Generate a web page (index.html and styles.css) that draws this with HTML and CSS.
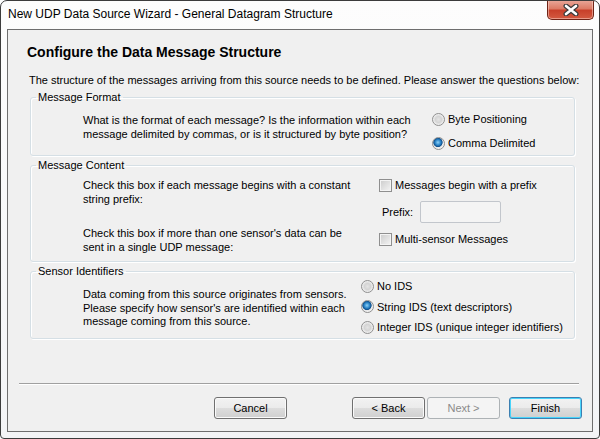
FILE: index.html
```html
<!DOCTYPE html>
<html lang="en">
<head>
  <meta charset="UTF-8">
  <title>New UDP Data Source Wizard</title>
  <link rel="stylesheet" href="styles.css">
</head>
<body>

  <div class="window">
    <div class="titlebar">
      <span class="title">New UDP Data Source Wizard - General Datagram Structure</span>
      <button class="close" title="Close">
        <svg width="16" height="12" viewBox="0 0 16 12">
          <path d="M3 2 L13 10 M13 2 L3 10" stroke="#3b3b3b" stroke-width="5" stroke-linecap="round"/>
          <path d="M3 2 L13 10 M13 2 L3 10" stroke="#ffffff" stroke-width="2.6" stroke-linecap="round"/>
        </svg>
      </button>
    </div>

    <div class="client">
      <h1>Configure the Data Message Structure</h1>
      <p class="intro">The structure of the messages arriving from this source needs to be defined. Please answer the questions below:</p>

      <fieldset class="group format">
        <legend>Message Format</legend>
        <div class="questions">
          <p>What is the format of each message? Is the information within each<br>message delimited by commas, or is it structured by byte position?</p>
        </div>
        <div class="options">
          <label class="opt"><span class="radio"></span>Byte Positioning</label>
          <label class="opt"><span class="radio on"></span>Comma Delimited</label>
        </div>
      </fieldset>

      <fieldset class="group content">
        <legend>Message Content</legend>
        <div class="questions">
          <p>Check this box if each message begins with a constant<br>string prefix:</p>
          <p>Check this box if more than one sensor's data can be<br>sent in a single UDP message:</p>
        </div>
        <div class="options">
          <label class="opt"><span class="check"></span>Messages begin with a prefix</label>
          <div class="prefix">
            <span>Prefix:</span>
            <input type="text" class="textbox" disabled>
          </div>
          <label class="opt"><span class="check"></span>Multi-sensor Messages</label>
        </div>
      </fieldset>

      <fieldset class="group sensors">
        <legend>Sensor Identifiers</legend>
        <div class="questions">
          <p>Data coming from this source originates from sensors.<br>Please specify how sensor's are identified within each<br>message coming from this source.</p>
        </div>
        <div class="options">
          <label class="opt"><span class="radio"></span>No IDS</label>
          <label class="opt"><span class="radio on"></span>String IDS (text descriptors)</label>
          <label class="opt"><span class="radio"></span>Integer IDS (unique integer identifiers)</label>
        </div>
      </fieldset>

      <div class="footer">
        <div class="separator"></div>
        <div class="buttons">
          <button class="btn cancel">Cancel</button>
          <button class="btn">&lt; Back</button>
          <button class="btn" disabled>Next &gt;</button>
          <button class="btn default">Finish</button>
        </div>
      </div>
    </div>
  </div>

</body>
</html>
```

FILE: styles.css
```css
html, body {
  margin: 0;
  padding: 0;
  background: #ffffff;
}
body {
  font-family: 'Liberation Sans', Arial, sans-serif;
  font-size: 11px;
  color: #000;
}
.window {
  width: 600px;
  height: 439px;
  box-sizing: border-box;
  border: 1px solid #3c3c3c;
  border-radius: 7px 7px 4px 4px;
  background: linear-gradient(#fdfdfd, #f3f4f6);
  display: flex;
  flex-direction: column;
  overflow: hidden;
}
.titlebar {
  height: 28px;
  flex: none;
  display: flex;
  align-items: flex-start;
  justify-content: space-between;
}
.title {
  padding: 6px 0 0 7px;
  font-size: 12px;
  line-height: 15px;
}
.close {
  width: 47px;
  height: 20px;
  margin: -1px 5px 0 0;
  padding: 0;
  border: 1px solid #6e2417;
  border-top: none;
  border-radius: 0 0 5px 5px;
  background: linear-gradient(#e9a99b 0%, #dc7b66 45%, #c8402a 55%, #d35a41 100%);
  box-shadow: inset 0 0 0 1px rgba(255, 220, 210, 0.5);
  display: flex;
  align-items: center;
  justify-content: center;
}
.client {
  flex: 1;
  min-height: 0;
  margin: 0 6px 6px 6px;
  border: 1px solid #6e6e6e;
  background: #f0f0f0;
  padding-top: 13px;
  display: flex;
  flex-direction: column;
}
h1 {
  margin: 0;
  padding-left: 19px;
  font-size: 14px;
  line-height: 18px;
  font-weight: bold;
}
.intro {
  margin: 12px 0 0 0;
  padding-left: 21px;
  line-height: 14px;
  white-space: nowrap;
}
.group {
  min-width: 0;
  margin: 3px 17px 0 22px;
  padding: 0 0 4px 5px;
  border: 1px solid #d5dfe5;
  border-radius: 3px;
  box-shadow: inset 1px 1px 0 #fff, 1px 1px 0 #fff;
  display: flex;
  align-items: flex-start;
}
.group legend {
  padding: 0 2px;
  line-height: 14px;
}
.questions {
  margin-left: 47px;
  display: flex;
  flex-direction: column;
  white-space: nowrap;
}
.questions p {
  margin: 0;
  line-height: 13.5px;
}
.options {
  display: flex;
  flex-direction: column;
}
.opt {
  height: 16px;
  display: flex;
  align-items: center;
  gap: 3px;
  white-space: nowrap;
}

/* Message Format */
.format {
  padding-top: 7px;
}
.format .questions {
  margin-top: 3px;
  width: 349px;
}
.format .options {
  gap: 8px;
}

/* Message Content */
.content {
  margin-top: 2px;
  padding-top: 5px;
  padding-bottom: 7px;
}
.content .questions {
  margin-top: 2px;
  width: 296px;
  gap: 21px;
}
.prefix {
  margin: 8px 0 8px 3px;
  display: flex;
  align-items: center;
  gap: 7px;
}
.textbox {
  width: 81px;
  height: 22px;
  box-sizing: border-box;
  margin: 0;
  border: 1px solid #c2c6cc;
  border-radius: 2px;
  background: #f4f4f4;
}

/* Sensor Identifiers */
.sensors {
  margin-top: 2px;
  padding-top: 0;
  padding-bottom: 3px;
}
.sensors .questions {
  margin-top: 10px;
  width: 278px;
}
.sensors .options {
  gap: 4.5px;
}

/* controls */
.radio {
  width: 13px;
  height: 13px;
  box-sizing: border-box;
  border-radius: 50%;
  border: 1px solid #8f8f8f;
  background: radial-gradient(circle at 50% 50%, #e4e4e4 0%, #d4d4d4 40%, #f6f6f6 75%);
  flex: none;
}
.radio.on {
  background: radial-gradient(circle at 45% 40%, #8fd1f7 0%, #2c86c9 30%, #0f4f8c 48%, #e8e8e8 56%, #f8f8f8 80%);
}
.check {
  width: 13px;
  height: 13px;
  box-sizing: border-box;
  border: 1px solid #8f8f8f;
  background: linear-gradient(135deg, #cbcbcb, #f5f5f5);
  box-shadow: inset 0 0 0 1px #f4f4f4;
  flex: none;
}

/* footer */
.footer {
  margin-top: auto;
  padding-bottom: 12px;
}
.separator {
  margin: 0 13px 0 11px;
  border-top: 1px solid #a0a0a0;
  border-bottom: 1px solid #ffffff;
}
.buttons {
  margin-top: 12px;
  padding-right: 10px;
  display: flex;
  justify-content: flex-end;
}
.btn {
  width: 73px;
  height: 22px;
  margin-left: 2px;
  padding: 0;
  font-family: inherit;
  font-size: 11px;
  color: #000;
  border: 1px solid #707070;
  border-radius: 3px;
  background: linear-gradient(#f2f2f2 0%, #ebebeb 50%, #dddddd 51%, #cfcfcf 100%);
  box-shadow: inset 0 0 0 1px #fafafa;
}
.btn.cancel {
  margin-right: 63px;
}
.btn:disabled {
  color: #8a8a8a;
  border-color: #adb2b5;
  background: #f4f4f4;
  box-shadow: none;
}
.btn.default {
  margin-left: 9px;
  border-color: #3c7fb1;
  box-shadow: inset 0 0 0 1px #48d4fb;
}
```
